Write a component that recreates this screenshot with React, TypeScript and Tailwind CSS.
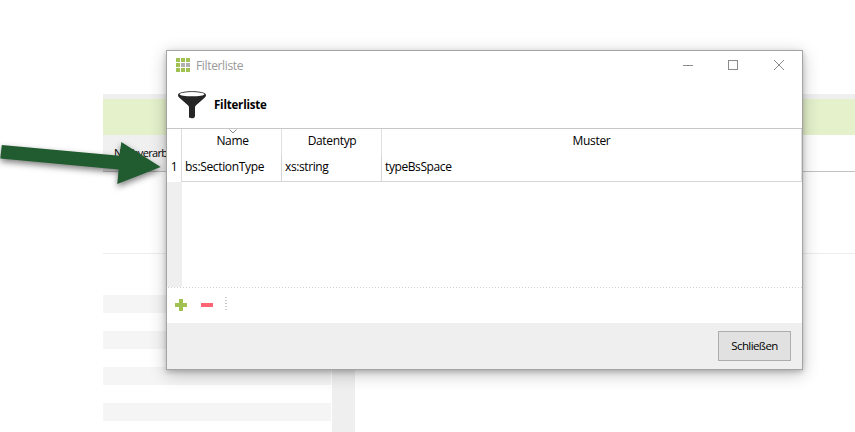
import type { ReactNode } from 'react';

const stripes = [0, 1, 2, 3];
const gridCells = [0, 1, 2, 3, 4, 5, 6, 7, 8];

function Cell({ children, className }: { children: ReactNode; className: string }) {
  return <div className={`flex items-center whitespace-nowrap ${className}`}>{children}</div>;
}

function Backdrop() {
  return (
    <div className="ml-[103px] flex h-full flex-col pt-[94px]">
      <div className="h-[5px] shrink-0 bg-[#efefef]" />
      <div className="h-9 shrink-0 bg-[#e5f1cb]" />
      <div className="flex h-[37px] shrink-0 border-b border-[#c1c1c1]">
        <div className="flex w-[80px] items-center whitespace-nowrap bg-[#f0f0f0] pl-[11px] text-[11px] tracking-[-0.65px]">
          Nachverarb
        </div>
      </div>
      <div className="h-[82px] shrink-0 border-b border-[#ededed]" />
      <div className="flex grow">
        <div className="flex w-[228px] flex-col gap-[18px] pt-[41px]">
          {stripes.map((s) => (
            <div key={s} className="h-[18px] bg-[#f5f5f5]" />
          ))}
        </div>
        <div className="ml-px w-[23px] bg-[#efefef]" />
      </div>
    </div>
  );
}

function TitleBar() {
  return (
    <div className="flex h-[30px] shrink-0 items-center pl-[9px] pr-[17px]">
      <div className="-mt-0.5 grid grid-cols-3 gap-px">
        {gridCells.map((c) => (
          <div key={c} className={`h-1 w-1 ${c === 4 || c === 5 ? 'bg-[#b0b0b0]' : 'bg-[#a2c153]'}`} />
        ))}
      </div>
      <span className="ml-1.5 text-[12px] tracking-[-0.35px] text-[#999]">Filterliste</span>
      <svg className="-mt-0.5 ml-auto" width="102" height="12" viewBox="0 0 102 12" fill="none" stroke="#8b8b8b">
        <path d="M0 6.5h10" />
        <rect x="45.5" y="1.5" width="9" height="9" />
        <path d="M91 1l10 10M101 1L91 11" />
      </svg>
    </div>
  );
}

function Funnel() {
  return (
    <svg width="28" height="28" viewBox="0 0 28 28">
      <path
        d="M0 4C0 1.4 6 .2 14 .2S28 1.4 28 4c0 1.4-.7 2.2-2 3.3l-8.2 7.2c-.6.6-.8 1.3-.8 2.2v8.2c0 1.6-1.5 2.3-3.2 2.3S11 26.800 11 26v-9.300c0-.9-.2-1.600-.8-2.200L2 7.300C.7 6.200 0 5.400 0 4z"
        fill="#252525"
      />
      <ellipse cx="14" cy="3.200" rx="12.400" ry="2.100" fill="#fff" />
    </svg>
  );
}

function Table() {
  return (
    <div className="h-[159px] shrink-0 border-t border-[#c7c7c7]">
      <div className="flex h-[53px] text-[12px] tracking-[-0.34px]">
        <Cell className="w-[14px] justify-center pt-[23px]">1</Cell>
        <div className="grid grow grid-cols-[100px_100px_1fr] grid-rows-[26px_27px] border-x border-[#dcdcdc]">
          <Cell className="relative justify-center border-r border-[#e0e0e0] pb-0.5 pl-0.5">
            Name
            <svg className="absolute left-[47px] top-0" width="8" height="5" viewBox="0 0 8 5" fill="none" stroke="#888">
              <path d="M.5.500L4 4L7.500.500" />
            </svg>
          </Cell>
          <Cell className="justify-center border-r border-[#e0e0e0] pb-0.5 pl-px">Datentyp</Cell>
          <Cell className="justify-center pb-0.5">Muster</Cell>
          <Cell className="border-b border-r border-[#d5d5d5] pl-[3px] pb-0.5">bs:SectionType</Cell>
          <Cell className="border-b border-r border-[#d5d5d5] pl-[3px] pb-0.5 tracking-[-0.4px]">xs:string</Cell>
          <Cell className="border-b border-[#d5d5d5] pl-[3px] pb-0.5 tracking-[-0.4px]">typeBsSpace</Cell>
        </div>
      </div>
      <div className="h-[105px] w-[15px] bg-[#efefef]" />
    </div>
  );
}

function Toolbar() {
  return (
    <div className="h-9 shrink-0">
      <svg width="635" height="36" viewBox="0 0 635 36">
        <path d="M1 .5H635" stroke="#cfcfcf" strokeDasharray="1 2" />
        <path d="M12 12h4v4h4v4h-4v4h-4v-4H8v-4h4z" fill="#a2c153" />
        <path d="M34 16h12v4H34z" fill="#ff6675" />
        <path d="M59 10v14" stroke="#cbcbcb" strokeWidth="2" strokeDasharray="1 2" />
      </svg>
    </div>
  );
}

function Dialog() {
  return (
    <div className="absolute left-[166px] top-[50px] flex h-[320px] w-[637px] flex-col border border-[#a3a5a3] bg-white shadow-[0_4px_16px_rgba(0,0,0,0.24),0_2px_5px_rgba(0,0,0,0.2)]">
      <TitleBar />
      <div className="flex h-[47px] shrink-0 items-center pl-[11px]">
        <Funnel />
        <span className="ml-2 text-[11.5px] font-bold tracking-[-0.2px]">Filterliste</span>
      </div>
      <Table />
      <Toolbar />
      <div className="flex grow justify-end bg-[#efefef] pr-[11px] pt-2">
        <button className="h-[30px] w-[73px] border border-[#adadad] bg-[#e1e1e1] text-[11.5px] tracking-[-0.6px]">
          Schließen
        </button>
      </div>
    </div>
  );
}

function Arrow() {
  return (
    <svg
      className="absolute left-0 top-[130px] drop-shadow-[0_3px_3px_rgba(0,0,0,0.5)]"
      width="170"
      height="70"
      viewBox="0 0 170 70"
    >
      <path d="M1.800 15L119.500 25.800L121.300 12L160.700 37L117.300 54L118.600 39.500L.3 28.500z" fill="#205c30" />
    </svg>
  );
}

export default function App() {
  return (
    <div className="relative h-[432px] w-[855px] overflow-hidden bg-white font-['Open_Sans','Noto_Sans',sans-serif] text-black">
      <Backdrop />
      <Dialog />
      <Arrow />
    </div>
  );
}
